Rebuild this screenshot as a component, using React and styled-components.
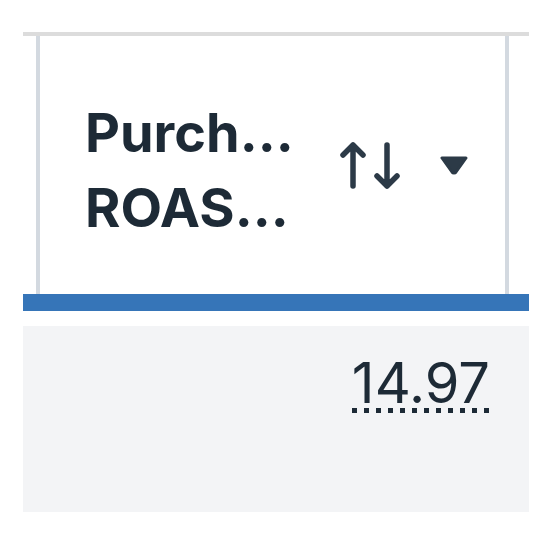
import React from "react";
import styled, { createGlobalStyle } from "styled-components";

const Global = createGlobalStyle`
  html, body { margin: 0; padding: 0; background: #ffffff; }
  body { font-family: Inter, "Noto Sans", "Liberation Sans", sans-serif; }
`;

const Page = styled.div`
  padding: 32px 0 0 23px;
`;

const Grid = styled.div`
  width: 506px;
  display: flex;
  flex-direction: column;
`;

const HeaderRow = styled.div`
  border-top: 4px solid #dcdcdc;
  display: flex;
  height: 258px;
`;

const HeaderCell = styled.div`
  margin-left: 13px;
  width: 473px;
  box-sizing: border-box;
  border-left: 4px solid #d3d9e0;
  border-right: 4px solid #d3d9e0;
  display: flex;
  align-items: center;
  padding: 0 37px 0 45px;
`;

const Label = styled.div`
  flex: 1;
  display: flex;
  flex-direction: column;
  margin-top: 10px;
  font-weight: 700;
  font-size: 54px;
  line-height: 75px;
  color: #1d2a36;
  white-space: nowrap;
`;

const Icons = styled.div`
  display: flex;
  align-items: center;
  gap: 40px;
  color: #2c3a47;
`;

const Accent = styled.div`
  height: 17px;
  background: #3675b8;
`;

const BodyRow = styled.div`
  margin-top: 15px;
  height: 186px;
  background: #f3f4f6;
  display: flex;
  justify-content: flex-end;
  align-items: flex-start;
  padding: 27px 39px 0 0;
  box-sizing: border-box;
`;

const Value = styled.span`
  display: inline-block;
  font-size: 56px;
  line-height: 60px;
  color: #1d2a36;
  background: repeating-linear-gradient(
      to right,
      #1d2a36 0 5px,
      transparent 5px 12px
    )
    left bottom / 100% 5px no-repeat;
`;

const SortIcon = () => (
  <svg width="60" height="48" viewBox="0 0 60 48" fill="none" stroke="currentColor"
    strokeWidth="5.5" strokeLinecap="round" strokeLinejoin="round">
    <path d="M13 4v41M3 14L13 4l10 10" />
    <path d="M47 4v41M37 35l10 10 10-10" />
  </svg>
);

const Caret = () => (
  <svg width="28" height="20" viewBox="0 0 28 20">
    <path d="M2 3h24l-10 14a2.5 2.5 0 0 1-4 0z" fill="currentColor" stroke="currentColor"
      strokeWidth="3" strokeLinejoin="round" />
  </svg>
);

export default function App() {
  return (
    <>
      <Global />
      <Page>
        <Grid>
          <HeaderRow>
            <HeaderCell>
              <Label>
                <span>Purch...</span>
                <span>ROAS...</span>
              </Label>
              <Icons>
                <SortIcon />
                <Caret />
              </Icons>
            </HeaderCell>
          </HeaderRow>
          <Accent />
          <BodyRow>
            <Value>14.97</Value>
          </BodyRow>
        </Grid>
      </Page>
    </>
  );
}
